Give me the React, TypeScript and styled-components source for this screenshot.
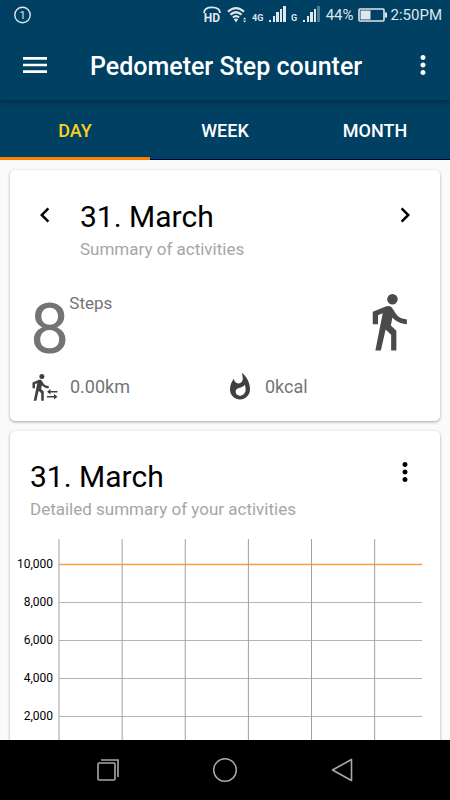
import React from "react";
import styled, { createGlobalStyle } from "styled-components";
import {
  MdChevronLeft,
  MdChevronRight,
  MdMenu,
  MdMoreVert,
  MdWhatshot,
} from "react-icons/md";

const GlobalStyle = createGlobalStyle`
  *, *::before, *::after { box-sizing: border-box; }
  body {
    margin: 0;
    background: #fafafa;
    font-family: Roboto, "Liberation Sans", sans-serif;
  }
  h1, h2, p { margin: 0; font-weight: 400; }
  button { font: inherit; }
`;

const Screen = styled.div`
  display: flex;
  flex-direction: column;
  height: 100vh;
`;

const StatusBar = styled.div`
  display: flex;
  align-items: center;
  justify-content: space-between;
  height: 30px;
  padding: 0 8px 0 14px;
  background: #004063;
  color: #dfe6ec;
  font-size: 15px;
  line-height: 30px;
`;

const StatusGroup = styled.div<{ $gap: number }>`
  display: flex;
  align-items: center;
  gap: ${(p) => p.$gap}px;
`;

const StatusIcon = styled.svg`
  display: block;
  flex: none;
`;

const Header = styled.header`
  position: relative;
  display: flex;
  align-items: center;
  height: 70px;
  padding: 0 12px 0 19px;
  background: #004063;
  color: #fff;
  box-shadow: 0 2px 5px rgba(0, 0, 0, 0.35);
  clip-path: inset(0 0 -8px 0);
`;

const Title = styled.h1`
  flex: 1;
  padding: 4px 0 0 39px;
  font-size: 25px;
  font-weight: 500;
  line-height: 32px;
  white-space: nowrap;
`;

const IconButton = styled.button`
  display: flex;
  flex: none;
  padding: 0;
  border: 0;
  background: none;
  color: inherit;
  cursor: pointer;
`;

const Tabs = styled.nav`
  display: grid;
  flex: none;
  grid-template-columns: repeat(3, 1fr);
  height: 60px;
  background: #004063;
`;

const Tab = styled.button<{ $active?: boolean }>`
  padding: ${(p) => (p.$active ? 5 : 3)}px 0 0;
  border: 0;
  border-bottom: ${(p) => (p.$active ? "3px solid #ff8000" : "1px solid #00004b")};
  background: none;
  color: ${(p) => (p.$active ? "#f9d020" : "#fff")};
  font-size: 18px;
  font-weight: 500;
  line-height: 52px;
  cursor: pointer;
`;

const Content = styled.main`
  display: flex;
  flex: 1;
  flex-direction: column;
  gap: 10px;
  min-height: 0;
  padding: 10px;
  overflow-y: auto;
  scrollbar-width: none;
`;

const Card = styled.section`
  flex: none;
  border-radius: 5px;
  background: #fff;
  box-shadow: 0 1px 3px rgba(0, 0, 0, 0.35);
`;

const SummaryCard = styled(Card)`
  padding: 27px 20px 19px;
`;

const DetailCard = styled(Card)`
  padding: 26px 0 20px;
`;

const CardHeader = styled.div`
  display: flex;
  align-items: flex-start;
`;

const DetailHeader = styled(CardHeader)`
  padding: 0 20px;
`;

const Heading = styled.div<{ $indent: number }>`
  flex: 1;
  padding-left: ${(p) => p.$indent}px;
`;

const DateTitle = styled.h2`
  color: #000;
  font-size: 30px;
  line-height: 40px;
`;

const Subtitle = styled.p`
  color: #a6a6a6;
  font-size: 17px;
  line-height: 24px;
`;

const HeaderAction = styled(IconButton)`
  padding-top: 3px;
`;

const StepsRow = styled.div`
  display: flex;
  align-items: flex-start;
  margin-top: 29px;
  color: #747474;
`;

const StepCount = styled.span`
  font-size: 70px;
  line-height: 78px;
`;

const StepLabel = styled.span`
  flex: 1;
  font-size: 17px;
  line-height: 26px;
`;

const WalkIcon = styled.svg`
  flex: none;
  fill: #4a4a4a;
`;

const Stats = styled.div`
  display: grid;
  grid-template-columns: 1fr 1fr;
  margin-top: 4px;
`;

const Stat = styled.div`
  display: flex;
  align-items: center;
  gap: 10px;
  color: #747474;
  font-size: 18px;
  line-height: 30px;

  svg { flex: none; color: #404040; }
`;

const Chart = styled.div`
  display: grid;
  grid-template-columns: 43px 1fr;
  column-gap: 6px;
  padding: 18px 18px 0 0;
`;

const AxisLabels = styled.div`
  padding-top: 6px;
  color: #000;
  font-size: 12px;
  line-height: 38px;
  text-align: right;
`;

const Plot = styled.svg`
  display: block;
  width: 100%;
  height: 254px;
  overflow: visible;
`;

const SystemNav = styled.nav`
  display: grid;
  grid-template-columns: repeat(3, 117px);
  flex: none;
  justify-content: center;
  align-items: center;
  height: 60px;
  background: #000;
  color: #a8a8a8;
`;

const NavButton = styled(IconButton)`
  justify-content: center;
`;

const yLabels = ["10,000", "8,000", "6,000", "4,000", "2,000"];
const hours = [0, 4, 8, 12, 16, 20];

function WalkingFigure() {
  return (
    <>
      <circle cx="13.5" cy="3.5" r="2" />
      <path d="M9.8 8.9L7 23h2.1l1.8-8 2.1 2v6h2v-7.5l-2.1-2 .6-3C14.8 12 16.8 13 19 13v-1.8c-2.1-.1-3.4-.9-4.3-2.3l-1.1-1.8c-.4-.6-.9-1-1.6-1-.3 0-.5.1-.8.1L6 8.3V13h2V9.6l1.8-.7z" />
    </>
  );
}

function SignalBars({ weak }: { weak?: boolean }) {
  return (
    <StatusIcon width="17" height="18" viewBox="0 0 17 18" fill="currentColor">
      <rect x="0" y="14" width="2" height="2" />
      <rect x="4" y="10" width="2" height="6" />
      <rect x="7" y="6" width="3" height="10" />
      <rect x="11" y="3" width="2" height="13" />
      <rect x="14" y="0" width="3" height="16" opacity={weak ? 0.35 : 1} />
    </StatusIcon>
  );
}

export default function App() {
  return (
    <Screen>
      <GlobalStyle />
      <StatusBar>
        <StatusIcon width="17" height="18" viewBox="0 0 17 18">
          <circle cx="8.5" cy="9" r="7.7" fill="none" stroke="currentColor" strokeWidth="1.4" />
          <text x="8.5" y="13" textAnchor="middle" fontSize="11" fill="currentColor">1</text>
        </StatusIcon>
        <StatusGroup $gap={6}>
          <StatusGroup $gap={5}>
            <StatusIcon width="19" height="20" viewBox="0 0 19 20">
              <path d="M1 8C1 4 4 2.4 9 2.4S17 4 17 8" fill="none" stroke="currentColor" strokeWidth="1.8" />
              <text x="9" y="17" textAnchor="middle" fontSize="12" fontWeight="700" fill="currentColor">HD</text>
            </StatusIcon>
            <StatusIcon width="20" height="18" viewBox="0 0 20 18" fill="none" stroke="currentColor">
              <path d="M1 5.6Q9 -1.4 17 5.6" strokeWidth="2.3" />
              <path d="M3.5 8.6Q9 3.8 14.5 8.6" strokeWidth="2.3" />
              <path d="M5.9 11.5Q9 8.9 12.1 11.5" strokeWidth="2.2" />
              <path d="M6.8 13.2Q9 12 11.2 13.2L9 16.4Z" fill="currentColor" stroke="none" />
              <path d="M16 13.2l1.6-1.8 1.6 1.8zM16 14.6l1.6 1.8 1.6-1.8z" fill="currentColor" stroke="none" />
            </StatusIcon>
            <StatusIcon width="12" height="18" viewBox="0 0 12 18">
              <text x="0" y="14.5" fontSize="9" fontWeight="700" fill="currentColor">4G</text>
            </StatusIcon>
            <SignalBars />
            <StatusIcon width="7" height="18" viewBox="0 0 7 18">
              <text x="0" y="14.5" fontSize="9" fontWeight="700" fill="currentColor">G</text>
            </StatusIcon>
            <SignalBars weak />
          </StatusGroup>
          <StatusGroup $gap={4}>
            <span>44%</span>
            <StatusIcon width="29" height="14" viewBox="0 0 29 14">
              <rect x="1" y="1" width="25" height="12" rx="1" fill="none" stroke="currentColor" strokeWidth="1.6" />
              <rect x="2.5" y="2.5" width="10" height="9" fill="currentColor" />
              <rect x="27" y="4.5" width="2" height="5" fill="currentColor" />
            </StatusIcon>
            <span>2:50PM</span>
          </StatusGroup>
        </StatusGroup>
      </StatusBar>
      <Header>
        <IconButton aria-label="Open menu"><MdMenu size={32} /></IconButton>
        <Title>Pedometer Step counter</Title>
        <IconButton aria-label="More options"><MdMoreVert size={30} /></IconButton>
      </Header>
      <Tabs>
        <Tab $active aria-current="page">DAY</Tab>
        <Tab>WEEK</Tab>
        <Tab>MONTH</Tab>
      </Tabs>
      <Content>
        <SummaryCard>
          <CardHeader>
            <HeaderAction aria-label="Previous day"><MdChevronLeft size={30} /></HeaderAction>
            <Heading $indent={20}>
              <DateTitle>31. March</DateTitle>
              <Subtitle>Summary of activities</Subtitle>
            </Heading>
            <HeaderAction aria-label="Next day"><MdChevronRight size={30} /></HeaderAction>
          </CardHeader>
          <StepsRow>
            <StepCount>8</StepCount>
            <StepLabel>Steps</StepLabel>
            <WalkIcon width="63" height="63" viewBox="0 0 24 24"><WalkingFigure /></WalkIcon>
          </StepsRow>
          <Stats>
            <Stat>
              <svg width="30" height="30" viewBox="0 0 24 24" fill="currentColor">
                <g transform="translate(-4 0)"><WalkingFigure /></g>
                <path d="M13.6 15.8l2.8-2.2v1.6H22v1.2h-5.6V18zM22 19.8l-2.8 2.2v-1.6h-5.6v-1.2h5.6v-1.6z" />
              </svg>
              <span>0.00km</span>
            </Stat>
            <Stat>
              <MdWhatshot size={30} />
              <span>0kcal</span>
            </Stat>
          </Stats>
        </SummaryCard>
        <DetailCard>
          <DetailHeader>
            <Heading $indent={0}>
              <DateTitle>31. March</DateTitle>
              <Subtitle>Detailed summary of your activities</Subtitle>
            </Heading>
            <IconButton aria-label="Chart options"><MdMoreVert size={30} /></IconButton>
          </DetailHeader>
          <Chart>
            <AxisLabels>
              {yLabels.map((label) => <div key={label}>{label}</div>)}
            </AxisLabels>
            <Plot>
              {yLabels.map((label, i) => (
                <line key={label} x1="0" x2="100%" y1={63.5 + i * 38} y2={63.5 + i * 38} stroke="#b4b4b4" />
              ))}
              <line x1="0" x2="100%" y1="25.5" y2="25.5" stroke="#ff9a3c" strokeWidth="1.5" />
              {hours.map((hour) => (
                <line key={hour} x1={`${(hour / 23) * 100}%`} x2={`${(hour / 23) * 100}%`} y1="0" y2="216" stroke="#a0a0a0" />
              ))}
            </Plot>
          </Chart>
        </DetailCard>
      </Content>
      <SystemNav>
        <NavButton aria-label="Recent apps">
          <svg width="24" height="24" viewBox="0 0 24 24" fill="none" stroke="currentColor" strokeWidth="1.6">
            <rect x="2" y="5" width="17" height="17" rx="1" />
            <path d="M5 2h17v17" />
          </svg>
        </NavButton>
        <NavButton aria-label="Home">
          <svg width="26" height="26" viewBox="0 0 26 26" fill="none" stroke="currentColor" strokeWidth="1.5">
            <circle cx="13" cy="13" r="11.3" />
          </svg>
        </NavButton>
        <NavButton aria-label="Back">
          <svg width="24" height="24" viewBox="0 0 24 24" fill="none" stroke="currentColor" strokeWidth="1.6" strokeLinejoin="round">
            <path d="M21.5 1.5v21L2.5 12z" />
          </svg>
        </NavButton>
      </SystemNav>
    </Screen>
  );
}
